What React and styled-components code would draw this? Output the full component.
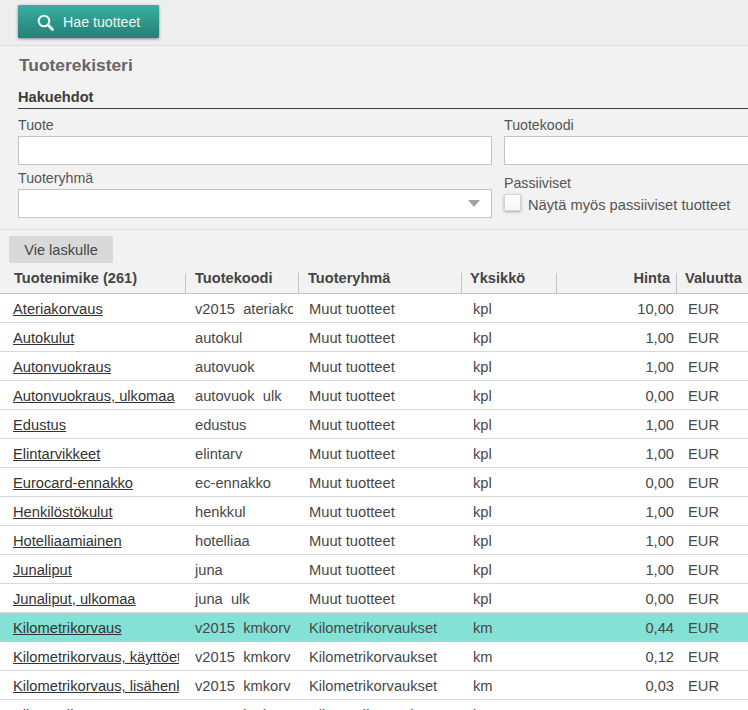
import styled, { createGlobalStyle } from "styled-components";

const GlobalStyle = createGlobalStyle`
  html, body {
    margin: 0;
    padding: 0;
    height: 710px;
    overflow: hidden;
    background: #fff;
  }
  * {
    box-sizing: border-box;
  }
`;

const Page = styled.div`
  width: 748px;
  height: 710px;
  overflow: hidden;
  font-family: "Liberation Sans", Arial, sans-serif;
  font-size: 14.7px;
  color: #444;
`;

const Toolbar = styled.div`
  height: 46px;
  padding: 5px 18px 0;
  background: #eeeeee;
  border-bottom: 1px solid #dcdcdc;
`;

const SearchButton = styled.button`
  display: flex;
  align-items: center;
  gap: 9px;
  width: 141px;
  height: 33px;
  padding: 0 0 0 19px;
  border: 0;
  border-radius: 1px;
  background: linear-gradient(#38b0a2, #257f78);
  box-shadow: 0 1px 3px rgba(0, 0, 0, 0.45);
  color: #eafaf7;
  font-family: inherit;
  font-size: 14.2px;
`;

const Filters = styled.section`
  height: 184px;
  padding: 9px 0 0 18px;
  background: #f2f2f2;
  border-bottom: 1px solid #dcdcdc;
`;

const PageTitle = styled.h1`
  margin: 0 0 0 1px;
  font-size: 17.4px;
  line-height: 21px;
  font-weight: bold;
  color: #666;
`;

const SectionTitle = styled.h2`
  width: 760px;
  height: 23px;
  margin: 10px 0 0;
  border-bottom: 1px solid #444;
  font-size: 14.6px;
  line-height: 22px;
  font-weight: bold;
  color: #3c3c3c;
`;

const FieldGrid = styled.div`
  display: grid;
  grid-template-columns: 474px 260px;
  column-gap: 12px;
  row-gap: 4px;
  margin-top: 7px;
`;

const Field = styled.div`
  display: flex;
  flex-direction: column;
`;

const FieldLabel = styled.label`
  height: ${(p) => p.$height || 20}px;
  padding-top: ${(p) => p.$offset || 0}px;
  line-height: 18px;
  font-size: 14.2px;
  color: #555;
`;

const TextInput = styled.div`
  height: 29px;
  background: #fff;
  border: 1px solid #c4c4c4;
`;

const SelectBox = styled(TextInput)`
  display: flex;
  align-items: center;
  justify-content: flex-end;
  padding-right: 11px;
`;

const SelectArrow = styled.span`
  width: 0;
  height: 0;
  border-left: 6px solid transparent;
  border-right: 6px solid transparent;
  border-top: 7px solid #a3a3a3;
`;

const CheckRow = styled.div`
  display: flex;
  align-items: center;
  gap: 7px;
  height: 20px;
  color: #555;
`;

const CheckBox = styled.span`
  width: 17px;
  height: 17px;
  margin-top: -6px;
  background: linear-gradient(#fff, #f6f6f6);
  border: 1px solid #d4d4d4;
  border-radius: 1px;
  box-shadow: 0 1px 3px rgba(0, 0, 0, 0.3);
`;

const ResultArea = styled.section`
  background: #f2f2f2;
  padding-top: 6px;
`;

const ExportButton = styled.button`
  display: block;
  width: 104px;
  height: 27px;
  margin-left: 9px;
  padding: 0;
  border: 0;
  border-radius: 2px;
  background: #d9d9d9;
  color: #444;
  font-family: inherit;
  font-size: 14.6px;
`;

const columns = "185px 113px 163px 95px 120px 90px";

const HeaderRow = styled.div`
  display: grid;
  grid-template-columns: ${columns};
  height: 31px;
  border-bottom: 1px solid #c4c4c4;
`;

const HeaderCell = styled.div`
  position: relative;
  padding: 0 ${(p) => (p.$right ? "6px" : "0")} 0 ${(p) => p.$pad || 10}px;
  line-height: 30px;
  font-size: 14.6px;
  font-weight: bold;
  color: #444;
  text-align: ${(p) => (p.$right ? "right" : "left")};
  white-space: nowrap;

  &::after {
    content: "";
    display: ${(p) => (p.$last ? "none" : "block")};
    position: absolute;
    right: -1px;
    bottom: 0;
    height: 20px;
    border-right: 1px solid #c4c4c4;
  }
`;

const Row = styled.div`
  display: grid;
  grid-template-columns: ${columns};
  height: 29px;
  background: ${(p) => (p.$selected ? "#84e1d5" : "#fff")};
  border-bottom: 1px solid ${(p) => (p.$selected ? "#84e1d5" : "#d8d8d8")};
`;

const Cell = styled.div`
  overflow: hidden;
  margin-right: ${(p) => p.$clip || 0}px;
  padding-left: ${(p) => p.$pad || 0}px;
  padding-right: ${(p) => (p.$right ? 2 : 0)}px;
  line-height: 30px;
  text-align: ${(p) => (p.$right ? "right" : "left")};
  white-space: pre;
  color: #484848;
`;

const NameLink = styled.a`
  color: #333;
  text-decoration: underline;
`;

const rows = [
  ["Ateriakorvaus", "v2015  ateriakorv", "Muut tuotteet", "kpl", "10,00"],
  ["Autokulut", "autokul", "Muut tuotteet", "kpl", "1,00"],
  ["Autonvuokraus", "autovuok", "Muut tuotteet", "kpl", "1,00"],
  ["Autonvuokraus, ulkomaa", "autovuok  ulk", "Muut tuotteet", "kpl", "0,00"],
  ["Edustus", "edustus", "Muut tuotteet", "kpl", "1,00"],
  ["Elintarvikkeet", "elintarv", "Muut tuotteet", "kpl", "1,00"],
  ["Eurocard-ennakko", "ec-ennakko", "Muut tuotteet", "kpl", "0,00"],
  ["Henkilöstökulut", "henkkul", "Muut tuotteet", "kpl", "1,00"],
  ["Hotelliaamiainen", "hotelliaa", "Muut tuotteet", "kpl", "1,00"],
  ["Junaliput", "juna", "Muut tuotteet", "kpl", "1,00"],
  ["Junaliput, ulkomaa", "juna  ulk", "Muut tuotteet", "kpl", "0,00"],
  ["Kilometrikorvaus", "v2015  kmkorv", "Kilometrikorvaukset", "km", "0,44", true],
  ["Kilometrikorvaus, käyttöetu", "v2015  kmkorv", "Kilometrikorvaukset", "km", "0,12"],
  ["Kilometrikorvaus, lisähenkilö", "v2015  kmkorv", "Kilometrikorvaukset", "km", "0,03"],
  ["Kilometrikorvaus, moottoripyörä", "v2015  kmkorv", "Kilometrikorvaukset", "km", "0,00"],
];

export default function App() {
  return (
    <Page>
      <GlobalStyle />
      <Toolbar>
        <SearchButton>
          <svg width="17" height="18" viewBox="0 0 17 18" fill="none" stroke="#e6faf6">
            <circle cx="7" cy="8" r="5.3" strokeWidth="2" />
            <path d="M11 12 L15.5 16.5" strokeWidth="3" strokeLinecap="round" />
          </svg>
          Hae tuotteet
        </SearchButton>
      </Toolbar>
      <Filters>
        <PageTitle>Tuoterekisteri</PageTitle>
        <SectionTitle>Hakuehdot</SectionTitle>
        <FieldGrid>
          <Field>
            <FieldLabel>Tuote</FieldLabel>
            <TextInput />
          </Field>
          <Field>
            <FieldLabel>Tuotekoodi</FieldLabel>
            <TextInput />
          </Field>
          <Field>
            <FieldLabel>Tuoteryhmä</FieldLabel>
            <SelectBox>
              <SelectArrow />
            </SelectBox>
          </Field>
          <Field>
            <FieldLabel $height={26} $offset={5}>
              Passiiviset
            </FieldLabel>
            <CheckRow>
              <CheckBox />
              Näytä myös passiiviset tuotteet
            </CheckRow>
          </Field>
        </FieldGrid>
      </Filters>
      <ResultArea>
        <ExportButton>Vie laskulle</ExportButton>
        <HeaderRow>
          <HeaderCell $pad={14}>Tuotenimike (261)</HeaderCell>
          <HeaderCell>Tuotekoodi</HeaderCell>
          <HeaderCell>Tuoteryhmä</HeaderCell>
          <HeaderCell $pad={9}>Yksikkö</HeaderCell>
          <HeaderCell $right>Hinta</HeaderCell>
          <HeaderCell $pad={9} $last>
            Valuutta
          </HeaderCell>
        </HeaderRow>
      </ResultArea>
      {rows.map(([name, code, group, unit, price, selected]) => (
        <Row key={name} $selected={selected}>
          <Cell $pad={13} $clip={6}>
            <NameLink href="#">{name}</NameLink>
          </Cell>
          <Cell $pad={10} $clip={5}>
            {code}
          </Cell>
          <Cell $pad={11}>{group}</Cell>
          <Cell $pad={12}>{unit}</Cell>
          <Cell $right>{price}</Cell>
          <Cell $pad={12}>EUR</Cell>
        </Row>
      ))}
    </Page>
  );
}
